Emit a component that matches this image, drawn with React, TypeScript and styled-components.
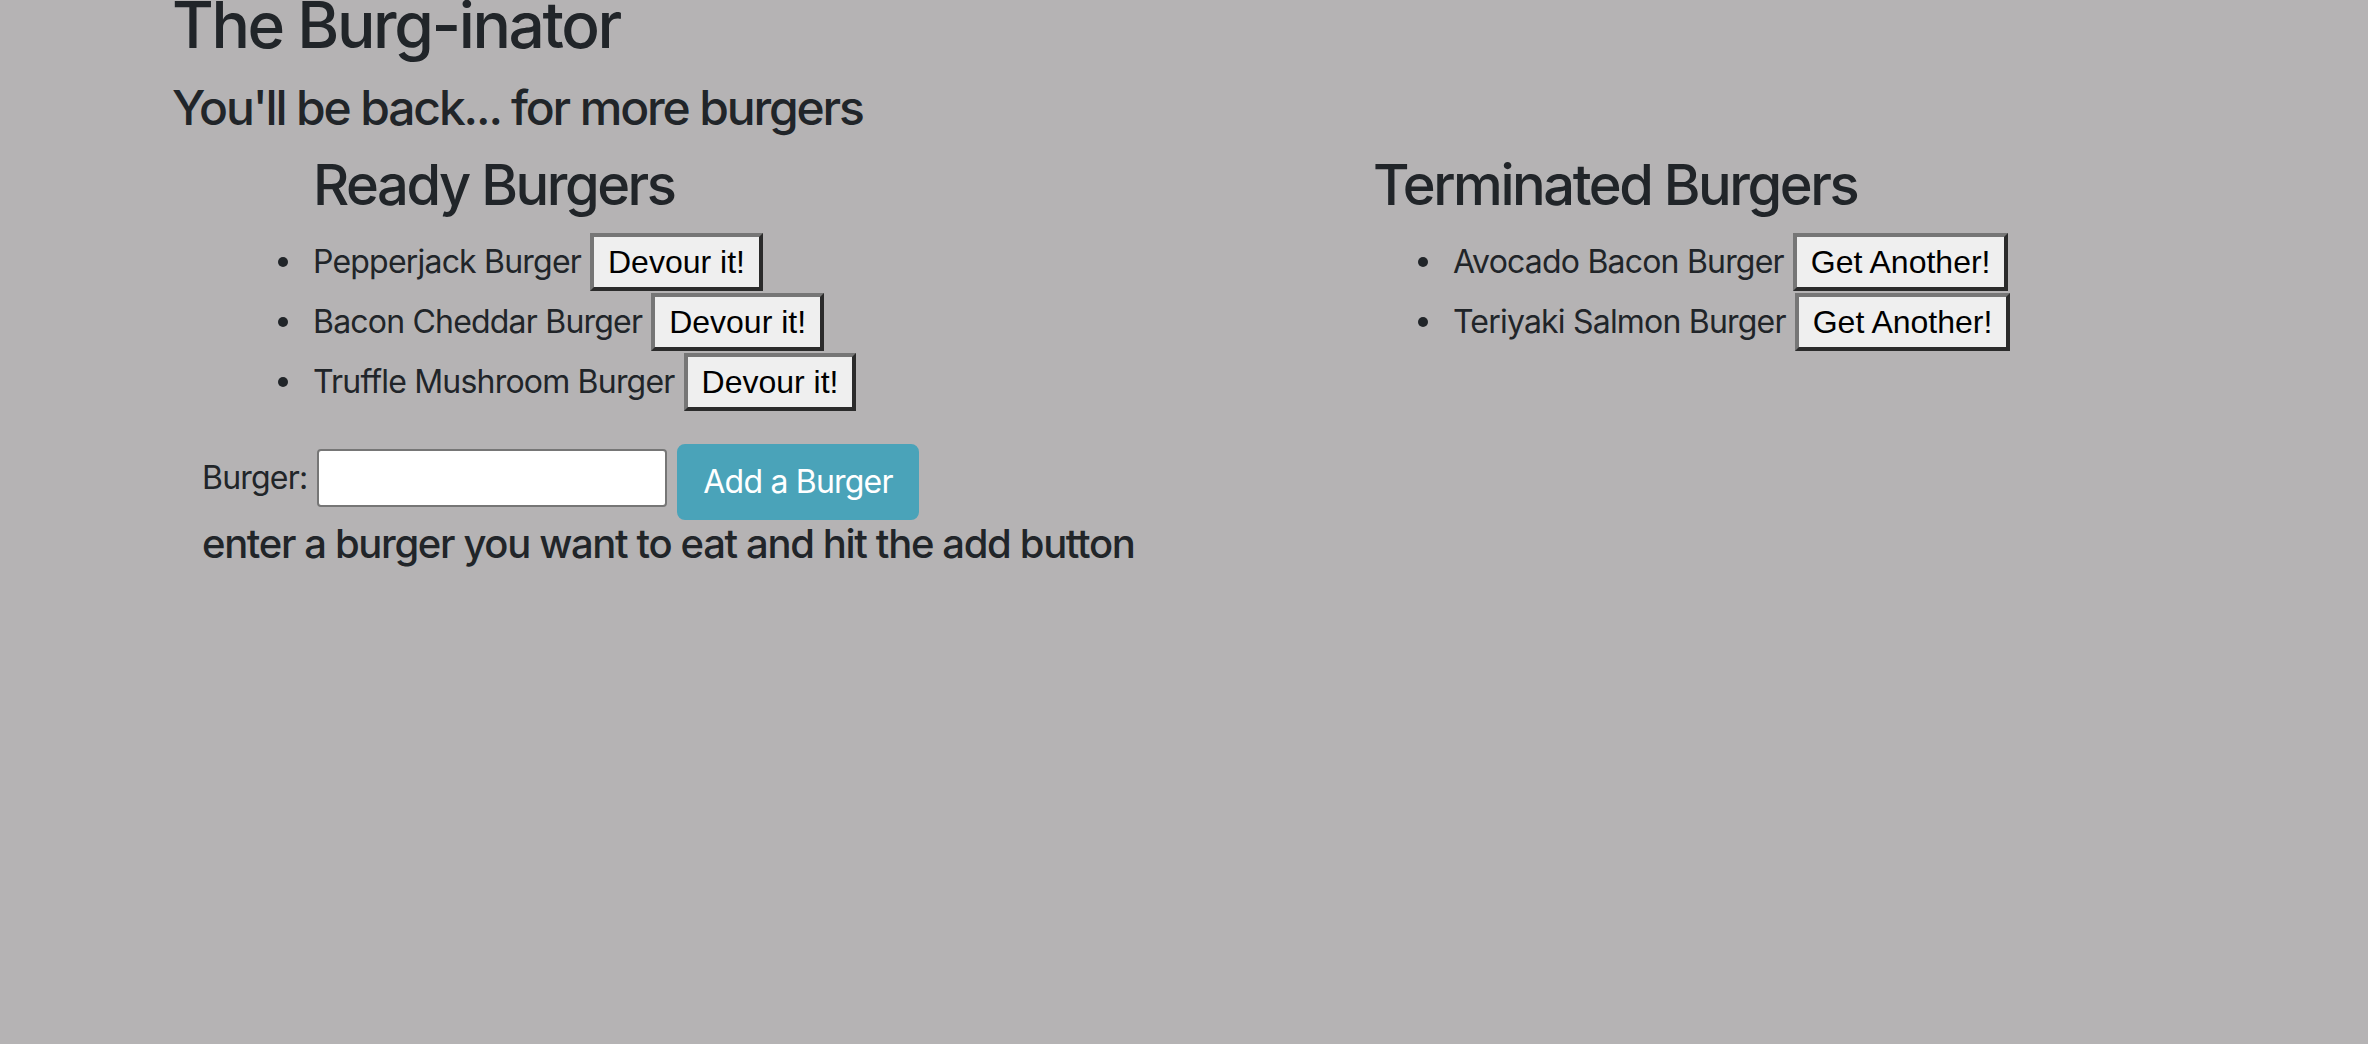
import React from "react";
import styled, { createGlobalStyle } from "styled-components";

const Global = createGlobalStyle`
  html, body {
    margin: 0;
    padding: 0;
    background: #b5b3b4;
  }
  body {
    font-family: Inter, "Noto Sans", sans-serif;
    color: #212529;
    font-size: 32px;
    line-height: 48px;
    letter-spacing: -0.8px;
  }
  * { box-sizing: border-box; }
`;

const Page = styled.div`
  min-height: 1044px;
  padding: 0 0 0 172px;
  overflow: hidden;
`;

const Title = styled.h2`
  margin: 0 0 28.8px;
  font-size: 64px;
  line-height: 50px;
  font-weight: 500;
  letter-spacing: -2.4px;
`;

const Subtitle = styled.h4`
  margin: 0 0 16px;
  font-size: 48px;
  line-height: 57.6px;
  font-weight: 500;
  letter-spacing: -2.15px;
`;

const Columns = styled.div`
  display: flex;
`;

const Column = styled.section<{ $width?: number; $pad: number }>`
  width: ${(p) => (p.$width ? `${p.$width}px` : "auto")};
  padding-left: ${(p) => p.$pad}px;
  flex: ${(p) => (p.$width ? "none" : "1")};
`;

const ColumnTitle = styled.h3`
  margin: 0 0 12px;
  font-size: 56px;
  line-height: 67.2px;
  font-weight: 500;
  letter-spacing: -2.45px;
`;

const List = styled.ul<{ $indent: number }>`
  margin: 0 0 32px;
  padding: 0 0 0 ${(p) => p.$indent}px;
  list-style: none;
`;

const Item = styled.li`
  height: 60px;
  display: flex;
  align-items: center;
  &::before {
    content: "";
    width: 10px;
    height: 10px;
    border-radius: 50%;
    background: #212529;
    margin-left: -35px;
    margin-right: 25px;
    flex: none;
  }
`;

const ItemName = styled.span`
  line-height: 48px;
  margin-right: 9px;
`;

const RawButton = styled.button`
  height: 58px;
  padding: 0 14px;
  font-family: "Liberation Sans", Arial, sans-serif;
  font-size: 32px;
  line-height: 36px;
  letter-spacing: 0;
  color: #000;
  background: #efefef;
  border-width: 4px;
  border-style: solid;
  border-color: #767676 #2b2b2b #2b2b2b #767676;
  border-radius: 0;
  cursor: pointer;
`;

const Form = styled.form`
  padding-left: 30px;
`;

const FormRow = styled.div`
  display: flex;
  align-items: flex-start;
`;

const Label = styled.label`
  margin-top: 10px;
  margin-right: 10px;
  line-height: 48px;
`;

const Input = styled.input`
  width: 350px;
  height: 58px;
  margin-top: 5px;
  margin-right: 10px;
  border: 2px solid #767676;
  border-radius: 4px;
  background: #fff;
  font-size: 26px;
  padding: 2px 4px;
`;

const AddButton = styled.button`
  height: 76px;
  padding: 12px 24px;
  font-family: Inter, "Noto Sans", sans-serif;
  font-size: 32px;
  line-height: 48px;
  letter-spacing: -0.8px;
  color: #fff;
  background: #4aa3b9;
  border: 2px solid #4aa3b9;
  border-radius: 8px;
  cursor: pointer;
`;

const Hint = styled.h5`
  margin: 0;
  font-size: 40px;
  line-height: 48px;
  font-weight: 500;
  letter-spacing: -1.35px;
`;

const ready = ["Pepperjack Burger", "Bacon Cheddar Burger", "Truffle Mushroom Burger"];
const devoured = ["Avocado Bacon Burger", "Teriyaki Salmon Burger"];

export default function App() {
  return (
    <>
      <Global />
      <Page>
        <Title>The Burg-inator</Title>
        <Subtitle>You'll be back... for more burgers</Subtitle>
        <Columns>
          <Column $width={1201} $pad={141}>
            <ColumnTitle>Ready Burgers</ColumnTitle>
            <List $indent={0}>
              {ready.map((b) => (
                <Item key={b}>
                  <ItemName>{b}</ItemName>
                  <RawButton type="button">Devour it!</RawButton>
                </Item>
              ))}
            </List>
          </Column>
          <Column $pad={0}>
            <ColumnTitle>Terminated Burgers</ColumnTitle>
            <List $indent={80}>
              {devoured.map((b) => (
                <Item key={b}>
                  <ItemName>{b}</ItemName>
                  <RawButton type="button">Get Another!</RawButton>
                </Item>
              ))}
            </List>
          </Column>
        </Columns>
        <Form onSubmit={(e) => e.preventDefault()}>
          <FormRow>
            <Label htmlFor="burger">Burger:</Label>
            <Input id="burger" type="text" />
            <AddButton type="submit">Add a Burger</AddButton>
          </FormRow>
          <Hint>enter a burger you want to eat and hit the add button</Hint>
        </Form>
      </Page>
    </>
  );
}
